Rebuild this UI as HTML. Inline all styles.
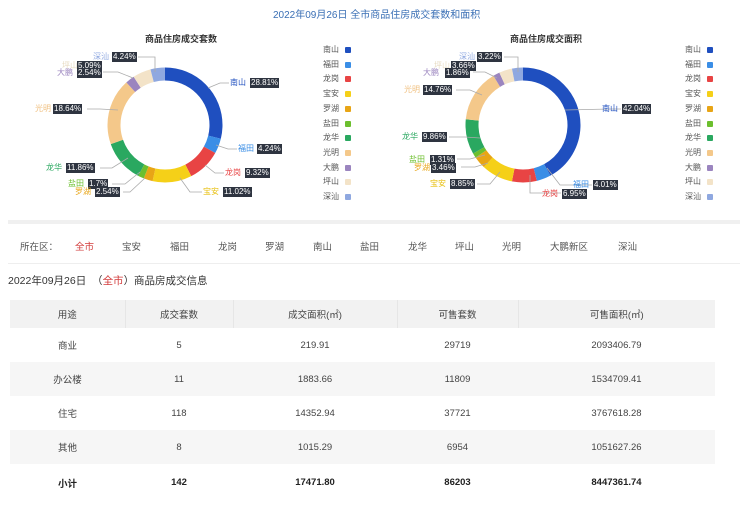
<!DOCTYPE html>
<html><head><meta charset="utf-8"><style>
*{margin:0;padding:0;box-sizing:border-box}
body{width:740px;height:505px;background:#fff;font-family:"Liberation Sans","Noto Sans CJK SC",sans-serif;position:relative;overflow:hidden;color:#333}
.a{position:absolute;white-space:nowrap}
.b{position:absolute;background:#2e3440;color:#fff;font-size:8px;line-height:10px;padding:0 1px;white-space:nowrap}
.t{position:absolute;font-size:8px;line-height:10px;white-space:nowrap}
.lg{position:absolute;font-size:8px;color:#555;line-height:10px}
.lg i{position:absolute;left:22px;top:2px;width:6px;height:6px;border-radius:1px}
table{position:absolute;left:10px;top:300px;width:705px;border-collapse:collapse;font-size:9.5px;color:#444;text-align:center}
td{height:34px;border:none}
thead td{height:28px;background:#f2f2f2;border-right:1px solid #e6e6e6}
tr.g td{background:#f6f6f6}
tr.s td{font-weight:bold;color:#222;height:37px}
</style></head><body>
<div class="a" style="left:273px;top:6px;font-size:10px;color:#3a6fb5">2022年09月26日 全市商品住房成交套数和面积</div>
<div class="a" style="left:145px;top:32px;font-size:9px;font-weight:bold;color:#333">商品住房成交套数</div>
<div class="a" style="left:510px;top:32px;font-size:9px;font-weight:bold;color:#333">商品住房成交面积</div>

<svg class="a" style="left:0;top:0" width="740" height="215">
<g transform="rotate(-90 165 125)" fill="none" stroke-width="13">
<circle cx="165" cy="125" r="51" stroke="#1f4fbf" stroke-dasharray="92.32 400" stroke-dashoffset="0"/>
<circle cx="165" cy="125" r="51" stroke="#3a8ee6" stroke-dasharray="13.59 400" stroke-dashoffset="-92.32"/>
<circle cx="165" cy="125" r="51" stroke="#e84444" stroke-dasharray="29.87 400" stroke-dashoffset="-105.91"/>
<circle cx="165" cy="125" r="51" stroke="#f5d018" stroke-dasharray="35.31 400" stroke-dashoffset="-135.78"/>
<circle cx="165" cy="125" r="51" stroke="#e8a516" stroke-dasharray="8.14 400" stroke-dashoffset="-171.09"/>
<circle cx="165" cy="125" r="51" stroke="#6cbf2e" stroke-dasharray="5.45 400" stroke-dashoffset="-179.23"/>
<circle cx="165" cy="125" r="51" stroke="#2aa860" stroke-dasharray="38 400" stroke-dashoffset="-184.68"/>
<circle cx="165" cy="125" r="51" stroke="#f4c88a" stroke-dasharray="59.73 400" stroke-dashoffset="-222.68"/>
<circle cx="165" cy="125" r="51" stroke="#9b85bf" stroke-dasharray="8.14 400" stroke-dashoffset="-282.41"/>
<circle cx="165" cy="125" r="51" stroke="#f3e3c8" stroke-dasharray="16.31 400" stroke-dashoffset="-290.55"/>
<circle cx="165" cy="125" r="51" stroke="#8fa8e0" stroke-dasharray="13.59 400" stroke-dashoffset="-306.86"/>
</g>
<g transform="rotate(-90 523 125)" fill="none" stroke-width="13">
<circle cx="523" cy="125" r="51" stroke="#1f4fbf" stroke-dasharray="134.71 400" stroke-dashoffset="0"/>
<circle cx="523" cy="125" r="51" stroke="#3a8ee6" stroke-dasharray="12.85 400" stroke-dashoffset="-134.71"/>
<circle cx="523" cy="125" r="51" stroke="#e84444" stroke-dasharray="22.27 400" stroke-dashoffset="-147.56"/>
<circle cx="523" cy="125" r="51" stroke="#f5d018" stroke-dasharray="28.36 400" stroke-dashoffset="-169.83"/>
<circle cx="523" cy="125" r="51" stroke="#e8a516" stroke-dasharray="11.09 400" stroke-dashoffset="-198.19"/>
<circle cx="523" cy="125" r="51" stroke="#6cbf2e" stroke-dasharray="4.2 400" stroke-dashoffset="-209.28"/>
<circle cx="523" cy="125" r="51" stroke="#2aa860" stroke-dasharray="31.6 400" stroke-dashoffset="-213.48"/>
<circle cx="523" cy="125" r="51" stroke="#f4c88a" stroke-dasharray="47.3 400" stroke-dashoffset="-245.08"/>
<circle cx="523" cy="125" r="51" stroke="#9b85bf" stroke-dasharray="5.96 400" stroke-dashoffset="-292.38"/>
<circle cx="523" cy="125" r="51" stroke="#f3e3c8" stroke-dasharray="11.73 400" stroke-dashoffset="-298.34"/>
<circle cx="523" cy="125" r="51" stroke="#8fa8e0" stroke-dasharray="10.32 400" stroke-dashoffset="-310.07"/>
</g>
<g fill="none" stroke="#aaa" stroke-width="0.8">
<path d="M208 88 L220 83 L229 83"/><path d="M216 145 L228 149 L237 149"/><path d="M205 165 L215 173 L224 173"/>
<path d="M180 178 L190 192 L202 192"/><path d="M145 178 L130 192 L123 192"/><path d="M140 172 L125 184 L112 184"/>
<path d="M128 158 L112 168 L100 168"/><path d="M118 110 L100 109 L87 109"/><path d="M133 78 L118 72 L103 72"/>
<path d="M155 72 L155 57 L138 57"/>
<path d="M565 110 L610 109 L621 109"/><path d="M547 168 L560 185 L592 185"/><path d="M530 175 L530 193 L561 193"/>
<path d="M500 172 L490 184 L477 184"/><path d="M488 163 L475 167 L461 167"/><path d="M485 155 L470 159 L457 159"/>
<path d="M480 138 L465 137 L449 137"/><path d="M482 95 L470 90 L456 90"/><path d="M497 78 L485 72 L473 72"/>
<path d="M518 72 L518 57 L504 57"/>
</g>
</svg>

<!-- left labels -->
<span class="t" style="left:93px;top:52px;color:#8fa8e0">深汕</span><span class="b" style="left:112px;top:52px">4.24%</span>
<span class="t" style="left:62px;top:61px;color:#e8dcc4">坪山</span><span class="b" style="left:77px;top:61px">5.09%</span>
<span class="t" style="left:57px;top:68px;color:#9b85bf">大鹏</span><span class="b" style="left:77px;top:68px">2.54%</span>
<span class="t" style="left:35px;top:104px;color:#f0c080">光明</span><span class="b" style="left:53px;top:104px">18.64%</span>
<span class="t" style="left:230px;top:78px;color:#1f4fbf">南山</span><span class="b" style="left:250px;top:78px">28.81%</span>
<span class="t" style="left:238px;top:144px;color:#3a8ee6">福田</span><span class="b" style="left:257px;top:144px">4.24%</span>
<span class="t" style="left:225px;top:168px;color:#e84444">龙岗</span><span class="b" style="left:245px;top:168px">9.32%</span>
<span class="t" style="left:203px;top:187px;color:#e8c010">宝安</span><span class="b" style="left:223px;top:187px">11.02%</span>
<span class="t" style="left:46px;top:163px;color:#2aa860">龙华</span><span class="b" style="left:66px;top:163px">11.86%</span>
<span class="t" style="left:68px;top:179px;color:#6cbf2e">盐田</span><span class="b" style="left:88px;top:179px">1.7%</span>
<span class="t" style="left:75px;top:187px;color:#e8a516">罗湖</span><span class="b" style="left:95px;top:187px">2.54%</span>
<!-- right labels -->
<span class="t" style="left:459px;top:52px;color:#8fa8e0">深汕</span><span class="b" style="left:477px;top:52px">3.22%</span>
<span class="t" style="left:434px;top:61px;color:#e8dcc4">坪山</span><span class="b" style="left:451px;top:61px">3.66%</span>
<span class="t" style="left:423px;top:68px;color:#9b85bf">大鹏</span><span class="b" style="left:445px;top:68px">1.86%</span>
<span class="t" style="left:404px;top:85px;color:#f0c080">光明</span><span class="b" style="left:423px;top:85px">14.76%</span>
<span class="t" style="left:602px;top:104px;color:#1f4fbf">南山</span><span class="b" style="left:622px;top:104px">42.04%</span>
<span class="t" style="left:402px;top:132px;color:#2aa860">龙华</span><span class="b" style="left:422px;top:132px">9.86%</span>
<span class="t" style="left:409px;top:155px;color:#6cbf2e">盐田</span><span class="b" style="left:430px;top:155px">1.31%</span>
<span class="t" style="left:414px;top:163px;color:#e8a516">罗湖</span><span class="b" style="left:431px;top:163px">3.46%</span>
<span class="t" style="left:430px;top:179px;color:#e8c010">宝安</span><span class="b" style="left:450px;top:179px">8.85%</span>
<span class="t" style="left:573px;top:180px;color:#3a8ee6">福田</span><span class="b" style="left:593px;top:180px">4.01%</span>
<span class="t" style="left:542px;top:189px;color:#e84444">龙岗</span><span class="b" style="left:562px;top:189px">6.95%</span>

<!-- legends -->
<div class="a" style="left:323px;top:45px">
<div class="lg" style="top:0">南山<i style="background:#1f4fbf"></i></div>
<div class="lg" style="top:14.7px">福田<i style="background:#3a8ee6"></i></div>
<div class="lg" style="top:29.4px">龙岗<i style="background:#e84444"></i></div>
<div class="lg" style="top:44.1px">宝安<i style="background:#f5d018"></i></div>
<div class="lg" style="top:58.8px">罗湖<i style="background:#e8a516"></i></div>
<div class="lg" style="top:73.5px">盐田<i style="background:#6cbf2e"></i></div>
<div class="lg" style="top:88.2px">龙华<i style="background:#2aa860"></i></div>
<div class="lg" style="top:102.9px">光明<i style="background:#f4c88a"></i></div>
<div class="lg" style="top:117.6px">大鹏<i style="background:#9b85bf"></i></div>
<div class="lg" style="top:132.3px">坪山<i style="background:#f3e3c8"></i></div>
<div class="lg" style="top:147px">深汕<i style="background:#8fa8e0"></i></div>
</div>
<div class="a" style="left:685px;top:45px">
<div class="lg" style="top:0">南山<i style="background:#1f4fbf"></i></div>
<div class="lg" style="top:14.7px">福田<i style="background:#3a8ee6"></i></div>
<div class="lg" style="top:29.4px">龙岗<i style="background:#e84444"></i></div>
<div class="lg" style="top:44.1px">宝安<i style="background:#f5d018"></i></div>
<div class="lg" style="top:58.8px">罗湖<i style="background:#e8a516"></i></div>
<div class="lg" style="top:73.5px">盐田<i style="background:#6cbf2e"></i></div>
<div class="lg" style="top:88.2px">龙华<i style="background:#2aa860"></i></div>
<div class="lg" style="top:102.9px">光明<i style="background:#f4c88a"></i></div>
<div class="lg" style="top:117.6px">大鹏<i style="background:#9b85bf"></i></div>
<div class="lg" style="top:132.3px">坪山<i style="background:#f3e3c8"></i></div>
<div class="lg" style="top:147px">深汕<i style="background:#8fa8e0"></i></div>
</div>

<div class="a" style="left:8px;top:220px;width:732px;height:4px;background:#f0f0f0"></div>
<div class="a" style="top:239px;left:0;width:740px;font-size:9.5px;color:#555">
<span class="a" style="left:20px">所在区：</span><span class="a" style="left:75px;color:#d23c3c">全市</span>
<span class="a" style="left:122px">宝安</span><span class="a" style="left:170px">福田</span><span class="a" style="left:218px">龙岗</span>
<span class="a" style="left:265px">罗湖</span><span class="a" style="left:313px">南山</span><span class="a" style="left:360px">盐田</span>
<span class="a" style="left:408px">龙华</span><span class="a" style="left:455px">坪山</span><span class="a" style="left:502px">光明</span>
<span class="a" style="left:550px">大鹏新区</span><span class="a" style="left:618px">深汕</span>
</div>
<div class="a" style="left:8px;top:263px;width:732px;height:1px;background:#eee"></div>
<div class="a" style="left:8px;top:273px;font-size:10.5px;color:#333">2022年09月26日 &nbsp;（<span style="color:#d23c3c">全市</span>）商品房成交信息</div>

<table>
<colgroup><col style="width:115px"><col style="width:108px"><col style="width:164px"><col style="width:121px"><col></colgroup>
<thead><tr><td>用途</td><td>成交套数</td><td>成交面积(㎡)</td><td>可售套数</td><td style="border-right:none">可售面积(㎡)</td></tr></thead>
<tbody>
<tr><td>商业</td><td>5</td><td>219.91</td><td>29719</td><td>2093406.79</td></tr>
<tr class="g"><td>办公楼</td><td>11</td><td>1883.66</td><td>11809</td><td>1534709.41</td></tr>
<tr><td>住宅</td><td>118</td><td>14352.94</td><td>37721</td><td>3767618.28</td></tr>
<tr class="g"><td>其他</td><td>8</td><td>1015.29</td><td>6954</td><td>1051627.26</td></tr>
<tr class="s"><td>小计</td><td>142</td><td>17471.80</td><td>86203</td><td>8447361.74</td></tr>
</tbody></table>
</body></html>
